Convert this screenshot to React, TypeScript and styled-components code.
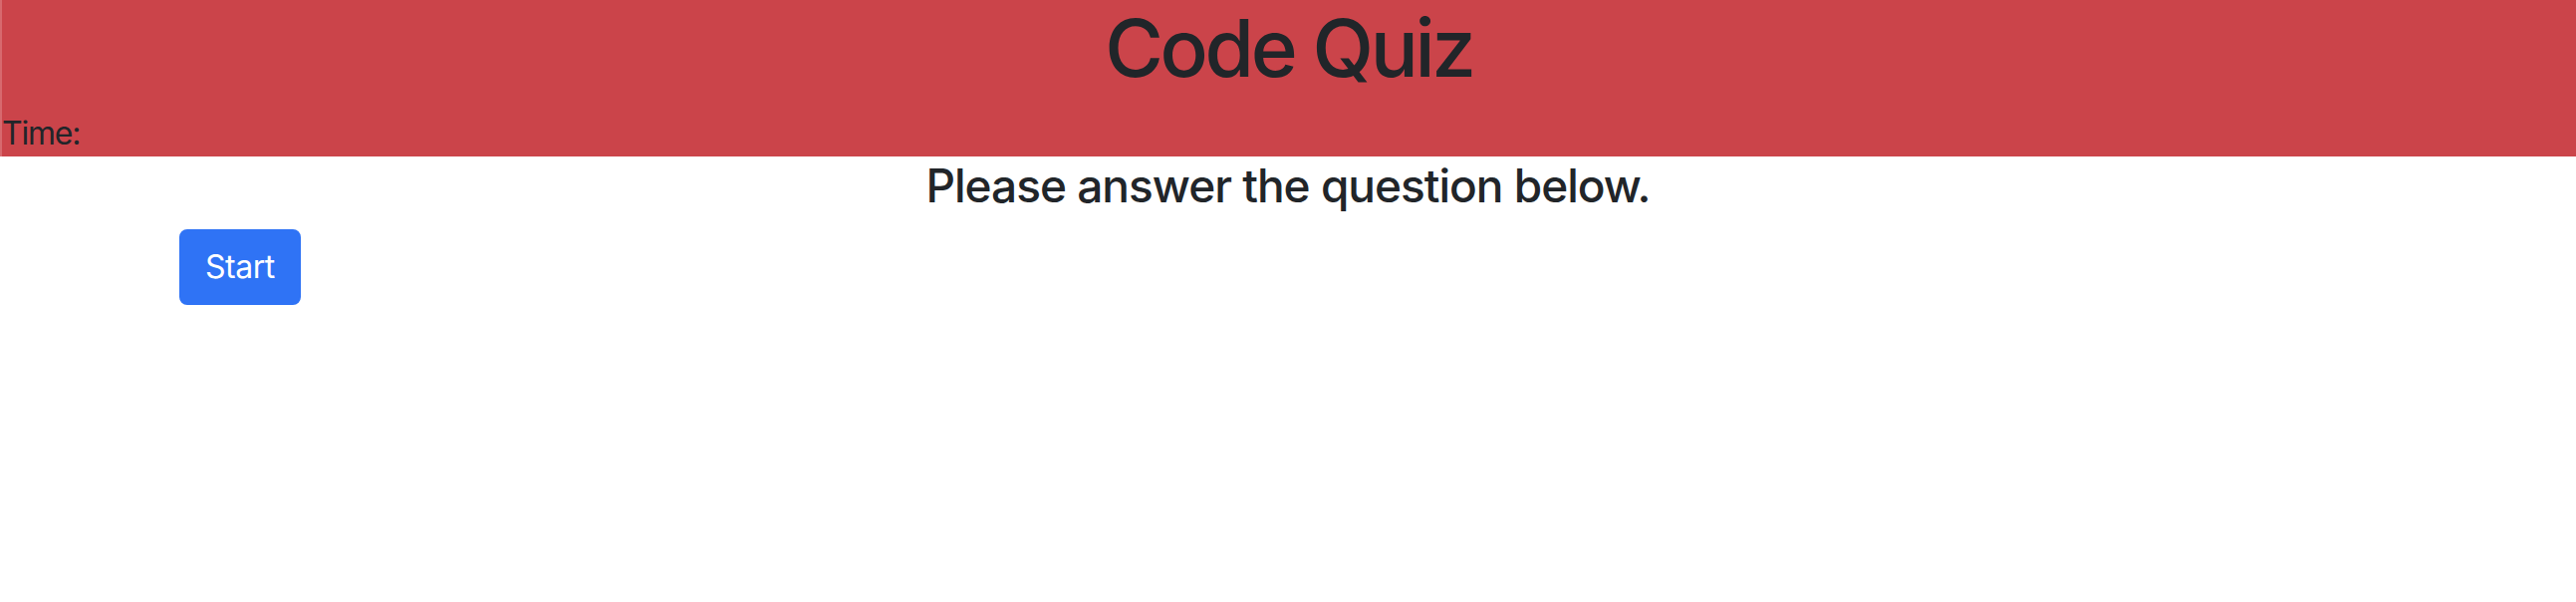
import React from "react";
import styled, { createGlobalStyle } from "styled-components";

const GlobalStyle = createGlobalStyle`
  html, body {
    margin: 0;
    padding: 0;
    background: #ffffff;
  }
  body {
    font-family: Inter, "Noto Sans", "Liberation Sans", sans-serif;
    color: #212529;
    font-size: 32px;
    line-height: 1.5;
  }
`;

const Header = styled.header`
  background: #cb444a;
  border-left: 2px solid #d7696e;
  display: flex;
  flex-direction: column;
  height: 157px;
  box-sizing: border-box;
`;

const Title = styled.h1`
  margin: 0 0 15px;
  font-size: 80px;
  font-weight: 500;
  line-height: 96px;
  text-align: center;
  letter-spacing: -3.3px;
`;

const Timer = styled.div`
  font-size: 32px;
  line-height: 46px;
  font-weight: 400;
  letter-spacing: -1.2px;
`;

const Main = styled.main`
  display: flex;
  flex-direction: column;
`;

const Prompt = styled.h4`
  margin: 0 0 15px;
  font-size: 46px;
  font-weight: 500;
  line-height: 58px;
  text-align: center;
  letter-spacing: -1px;
`;

const Container = styled.div`
  width: 100%;
  max-width: 2226px;
  margin: 0 auto;
  display: flex;
`;

const Button = styled.button`
  font-family: inherit;
  font-size: 32px;
  line-height: 48px;
  font-weight: 400;
  color: #ffffff;
  background: #2f73f5;
  border: 2px solid #2f73f5;
  border-radius: 8px;
  padding: 12px 24px;
  cursor: pointer;
  letter-spacing: -0.5px;
`;

export default function App() {
  return (
    <>
      <GlobalStyle />
      <Header>
        <Title>Code Quiz</Title>
        <Timer>Time:</Timer>
      </Header>
      <Main>
        <Prompt>Please answer the question below.</Prompt>
        <Container>
          <Button>Start</Button>
        </Container>
      </Main>
    </>
  );
}
